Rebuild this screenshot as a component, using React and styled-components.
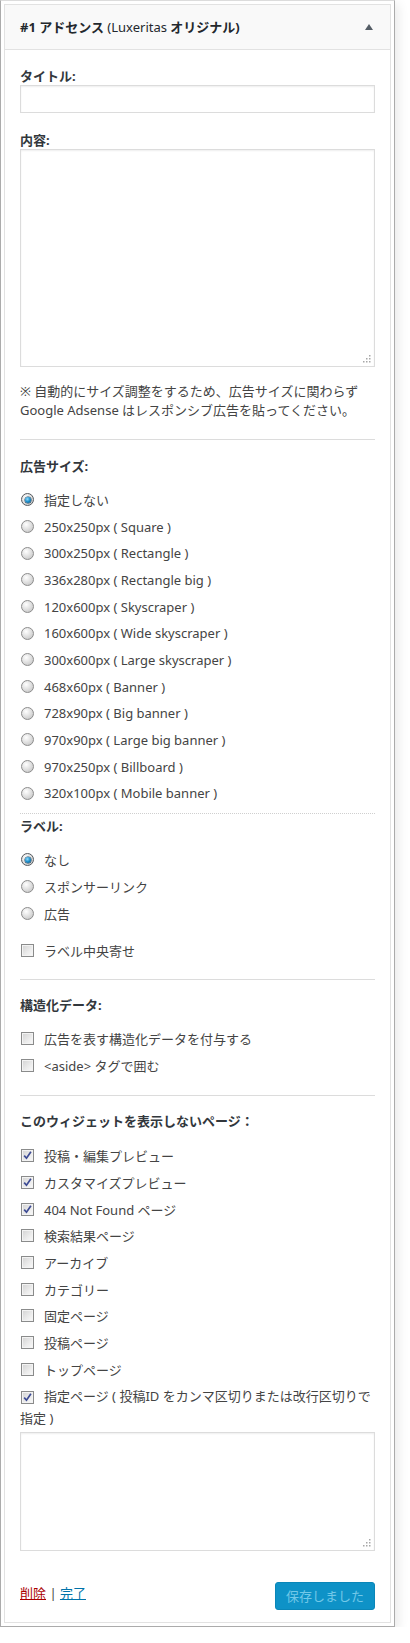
import React from "react";
import styled, { createGlobalStyle, css } from "styled-components";

const GlobalStyle = createGlobalStyle`
  html, body {
    margin: 0;
    padding: 0;
    background: #fff;
  }
  body {
    font-family: "Noto Sans", "Noto Sans CJK JP", sans-serif;
    font-size: 13px;
    color: #444;
  }
  * { box-sizing: border-box; }
`;

const Frame = styled.div`
  width: 395px;
  padding: 3px;
  border: 1px solid #ababab;
  border-top-color: #dcdcdc;
  background: #fff;
  box-shadow: 4px 4px 10px rgba(0, 0, 0, 0.08);
`;

const Widget = styled.div`
  border: 1px solid #e2e2e2;
  background: #fff;
`;

const Header = styled.div`
  height: 45px;
  display: flex;
  align-items: center;
  justify-content: space-between;
  padding: 0 17px 0 15px;
  background: #f9f9f9;
  border-bottom: 1px solid #e2e2e2;
`;

const Title = styled.h3`
  margin: 0;
  font-size: 13px;
  font-weight: 700;
  color: #23282d;
  line-height: 20px;
  span { font-weight: 400; }
`;

const Toggle = styled.span`
  width: 0;
  height: 0;
  border-left: 4px solid transparent;
  border-right: 4px solid transparent;
  border-bottom: 6px solid #555d66;
`;

const Body = styled.div`
  padding: 17px 15px 12px;
`;

const FieldLabel = styled.div`
  margin-top: ${(p) => p.$gap || 0}px;
  line-height: 18px;
  font-weight: 700;
  color: #32373c;
`;

const fieldBox = css`
  display: block;
  width: 100%;
  border: 1px solid #dcdcdc;
  background: #fff;
  box-shadow: inset 0 1px 2px rgba(0, 0, 0, 0.07);
  font: inherit;
  margin: 0;
`;

const TextInput = styled.input`
  ${fieldBox}
  height: 28px;
`;

const AreaWrap = styled.div`
  position: relative;
  margin-top: ${(p) => p.$gap || 0}px;
`;

const TextArea = styled.textarea`
  ${fieldBox}
  height: ${(p) => p.$h}px;
  resize: none;
`;

const Grip = styled.svg`
  position: absolute;
  right: 4px;
  bottom: 4px;
`;

const Note = styled.p`
  margin: 15px 0 0;
  line-height: 19px;
  color: #444;
`;

const Rule = styled.div`
  margin-top: ${(p) => p.$gap}px;
  border-top: 1px ${(p) => (p.$dotted ? "dotted #cfcfcf" : "solid #dcdcdc")};
`;

const List = styled.div`
  margin-top: ${(p) => p.$gap}px;
  display: flex;
  flex-direction: column;
`;

const Choice = styled.label`
  height: ${80 / 3}px;
  display: flex;
  align-items: center;
  gap: 10px;
  padding-left: 1px;
  color: #444;
  white-space: nowrap;
`;

const WrapChoice = styled.label`
  display: block;
  padding-top: 3px;
  line-height: 22px;
  color: #444;
`;

const Radio = styled.span`
  position: relative;
  flex: none;
  width: 13px;
  height: 13px;
  border-radius: 50%;
  border: 1px solid ${(p) => (p.$checked ? "#55595e" : "#8c8c8c")};
  background: radial-gradient(circle at 38% 32%, #ffffff 0%, #e2e2e2 45%, #bdbdbd 100%);
  ${(p) =>
    p.$checked &&
    css`
      &::after {
        content: "";
        position: absolute;
        left: 2.5px;
        top: 2.5px;
        width: 6px;
        height: 6px;
        border-radius: 50%;
        background: radial-gradient(circle at 40% 35%, #8fdcff 0%, #1a8cc8 50%, #0b4a73 100%);
        box-shadow: 0 0 0 0.5px #163a55;
      }
    `}
`;

const Box = styled.span`
  flex: none;
  display: inline-flex;
  align-items: center;
  justify-content: center;
  width: 13px;
  height: 13px;
  border: 1px solid #8a8b8b;
  box-shadow: inset 0 0 0 1px #f3f3f3;
  background: linear-gradient(135deg, #d2d2d2 0%, #ececec 60%, #fafafa 100%);
  vertical-align: -2px;
  margin: ${(p) => (p.$inline ? "0 10px 0 1px" : "0")};
`;

const Footer = styled.div`
  margin-top: 31px;
  height: 28px;
  display: flex;
  justify-content: space-between;
  align-items: flex-start;
`;

const Links = styled.div`
  line-height: 22px;
  color: #444;
`;

const Link = styled.a`
  color: ${(p) => (p.$danger ? "#a00" : "#0073aa")};
  text-decoration: underline;
`;

const SaveButton = styled.button`
  width: 100px;
  height: 28px;
  border: 1px solid #0a86b8;
  border-radius: 3px;
  background: #0e92c7;
  color: #72c8e8;
  font: inherit;
  font-size: 13px;
  padding: 0;
`;

const Check = () => (
  <svg width="11" height="11" viewBox="0 0 11 11">
    <path d="M2.2 5.6 L4.5 8.2 L8.9 1.8" fill="none" stroke="#3d4b94" strokeWidth="1.7" />
  </svg>
);

const ResizeGrip = () => (
  <Grip width="8" height="8" viewBox="0 0 8 8">
    {[
      [7, 1],
      [4, 4],
      [7, 4],
      [1, 7],
      [4, 7],
      [7, 7],
    ].map(([x, y]) => (
      <rect key={`${x}-${y}`} x={x - 1} y={y - 1} width="1.5" height="1.5" fill="#a7a7a7" />
    ))}
  </Grip>
);

const RadioRow = ({ checked, children }) => (
  <Choice>
    <Radio $checked={checked} />
    {children}
  </Choice>
);

const CheckRow = ({ checked, children }) => (
  <Choice>
    <Box>{checked && <Check />}</Box>
    {children}
  </Choice>
);

const sizes = [
  "指定しない",
  "250x250px ( Square )",
  "300x250px ( Rectangle )",
  "336x280px ( Rectangle big )",
  "120x600px ( Skyscraper )",
  "160x600px ( Wide skyscraper )",
  "300x600px ( Large skyscraper )",
  "468x60px ( Banner )",
  "728x90px ( Big banner )",
  "970x90px ( Large big banner )",
  "970x250px ( Billboard )",
  "320x100px ( Mobile banner )",
];

const labels = ["なし", "スポンサーリンク", "広告"];

const pages = [
  ["投稿・編集プレビュー", true],
  ["カスタマイズプレビュー", true],
  ["404 Not Found ページ", true],
  ["検索結果ページ", false],
  ["アーカイブ", false],
  ["カテゴリー", false],
  ["固定ページ", false],
  ["投稿ページ", false],
  ["トップページ", false],
];

export default function App() {
  return (
    <>
      <GlobalStyle />
      <Frame>
        <Widget>
          <Header>
            <Title>
              #1 アドセンス <span>(Luxeritas</span> オリジナル)
            </Title>
            <Toggle />
          </Header>
          <Body>
            <FieldLabel>タイトル:</FieldLabel>
            <TextInput type="text" />
            <FieldLabel $gap={18}>内容:</FieldLabel>
            <AreaWrap>
              <TextArea $h={218} />
              <ResizeGrip />
            </AreaWrap>
            <Note>
              ※ 自動的にサイズ調整をするため、広告サイズに関わらず
              <br />
              Google Adsense はレスポンシブ広告を貼ってください。
            </Note>

            <Rule $gap={19} />
            <FieldLabel $gap={17}>広告サイズ:</FieldLabel>
            <List $gap={11.67}>
              {sizes.map((s, i) => (
                <RadioRow key={s} checked={i === 0}>
                  {s}
                </RadioRow>
              ))}
            </List>

            <Rule $gap={6} $dotted />
            <FieldLabel $gap={3}>ラベル:</FieldLabel>
            <List $gap={12}>
              {labels.map((s, i) => (
                <RadioRow key={s} checked={i === 0}>
                  {s}
                </RadioRow>
              ))}
            </List>
            <List $gap={11}>
              <CheckRow>ラベル中央寄せ</CheckRow>
            </List>

            <Rule $gap={14.67} />
            <FieldLabel $gap={16}>構造化データ:</FieldLabel>
            <List $gap={11.67}>
              <CheckRow>広告を表す構造化データを付与する</CheckRow>
              <CheckRow>&lt;aside&gt; タグで囲む</CheckRow>
            </List>

            <Rule $gap={16} />
            <FieldLabel $gap={16}>このウィジェットを表示しないページ：</FieldLabel>
            <List $gap={12.67}>
              {pages.map(([s, c]) => (
                <CheckRow key={s} checked={c}>
                  {s}
                </CheckRow>
              ))}
            </List>
            <WrapChoice>
              <Box $inline>
                <Check />
              </Box>
              指定ページ ( 投稿ID をカンマ区切りまたは改行区切りで指定 )
            </WrapChoice>
            <AreaWrap $gap={2.33}>
              <TextArea $h={119} />
              <ResizeGrip />
            </AreaWrap>

            <Footer>
              <Links>
                <Link $danger href="#">削除</Link> | <Link href="#">完了</Link>
              </Links>
              <SaveButton type="button">保存しました</SaveButton>
            </Footer>
          </Body>
        </Widget>
      </Frame>
    </>
  );
}
